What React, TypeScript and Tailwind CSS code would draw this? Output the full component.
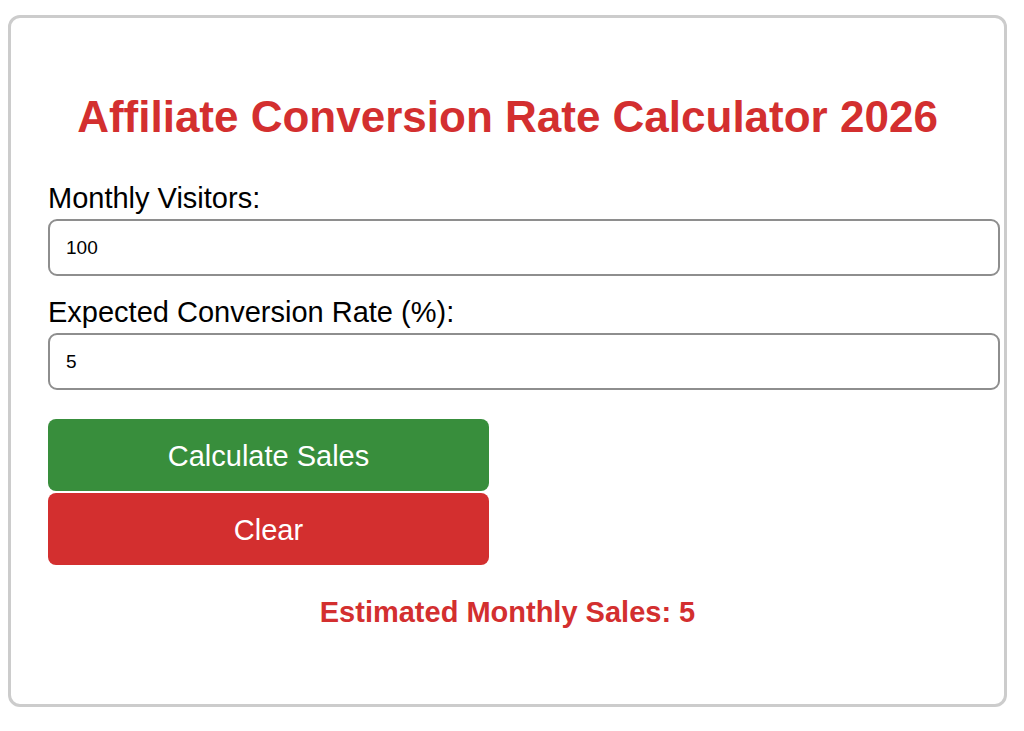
import { useState } from "react";

export default function App() {
  const [visitors, setVisitors] = useState("100");
  const [rate, setRate] = useState("5");
  const [sales, setSales] = useState<number | null>(5);

  const calc = () => {
    const v = parseFloat(visitors) || 0;
    const r = parseFloat(rate) || 0;
    setSales(Math.round((v * r) / 100));
  };

  const clear = () => {
    setVisitors("");
    setRate("");
    setSales(null);
  };

  return (
    <div className="min-h-screen bg-white pt-[15px] pl-[8px] font-['Liberation_Sans',Arial,sans-serif]">
      <div className="w-[999px] h-[692px] border-[3px] border-[#cccccc] rounded-[12px] pl-[37px] pr-[4px] pt-[73px]">
        <h1 className="text-[44px] leading-[52px] font-bold text-[#d32f2f] text-center pr-[33px] whitespace-nowrap">
          Affiliate Conversion Rate Calculator 2026
        </h1>
        <div className="mt-[39px]">
          <label className="block text-[29px] leading-[33px] text-black">Monthly Visitors:</label>
          <input
            value={visitors}
            onChange={e => setVisitors(e.target.value)}
            className="block w-full h-[57px] mt-[4px] px-[16px] text-[19px] text-black border-2 border-[#8e8e8e] rounded-[9px] outline-none"
          />
        </div>
        <div className="mt-[20px]">
          <label className="block text-[29px] leading-[33px] text-black">Expected Conversion Rate (%):</label>
          <input
            value={rate}
            onChange={e => setRate(e.target.value)}
            className="block w-full h-[57px] mt-[4px] px-[16px] text-[19px] text-black border-2 border-[#8e8e8e] rounded-[9px] outline-none"
          />
        </div>
        <button
          onClick={calc}
          className="block w-[441px] h-[72px] mt-[29px] pt-[4px] rounded-[8px] bg-[#388e3c] text-white text-[29px]"
        >
          Calculate Sales
        </button>
        <button
          onClick={clear}
          className="block w-[441px] h-[72px] mt-[2px] pt-[4px] rounded-[8px] bg-[#d32f2f] text-white text-[29px]"
        >
          Clear
        </button>
        <div className="mt-[30px] text-center pr-[33px] text-[29px] leading-[34px] font-bold text-[#d32f2f]">
          {sales !== null ? `Estimated Monthly Sales: ${sales}` : ""}
        </div>
      </div>
    </div>
  );
}
